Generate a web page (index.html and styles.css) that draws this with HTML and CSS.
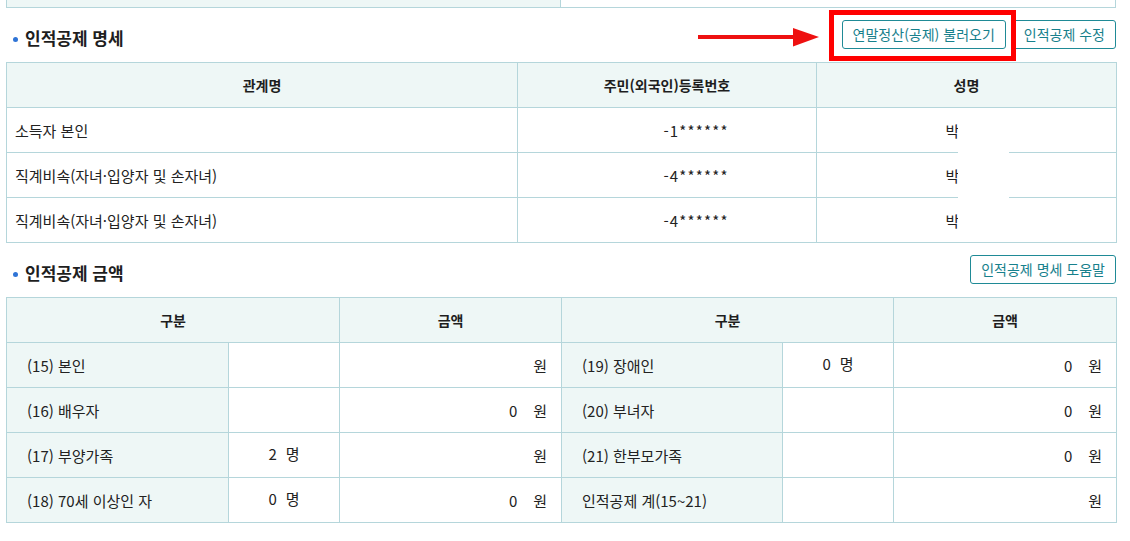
FILE: index.html
```html
<!DOCTYPE html>
<html lang="ko">
<head>
<meta charset="utf-8">
<title>인적공제</title>
<link rel="stylesheet" href="styles.css">
</head>
<body>
<div class="page">
  <div class="strip"><div class="strip-l"></div><div class="strip-r"></div></div>

  <div class="sec-head">
    <h3 class="sec-title"><span class="dot"></span>인적공제 명세</h3>
    <div class="actions">
      <svg class="arrow" width="121" height="20" viewBox="0 0 121 20" aria-hidden="true">
        <rect x="0" y="8" width="97" height="4" fill="#ee1111"/>
        <polygon points="95,1 121,10 95,19.5" fill="#ee1111"/>
      </svg>
      <div class="hl">
        <button class="btn">연말정산(공제) 불러오기</button>
        <span class="hl-box"></span>
      </div>
      <button class="btn">인적공제 수정</button>
    </div>
  </div>

  <div class="tbl-wrap">
    <table class="tbl">
      <colgroup><col class="c-rel"><col class="c-id"><col class="c-name"></colgroup>
      <thead>
        <tr><th>관계명</th><th>주민(외국인)등록번호</th><th>성명</th></tr>
      </thead>
      <tbody>
        <tr><td class="left">소득자 본인</td><td class="rrn">-1******</td><td class="name">박</td></tr>
        <tr><td class="left">직계비속(자녀·입양자 및 손자녀)</td><td class="rrn">-4******</td><td class="name">박</td></tr>
        <tr><td class="left">직계비속(자녀·입양자 및 손자녀)</td><td class="rrn">-4******</td><td class="name">박</td></tr>
      </tbody>
    </table>
    <span class="mask"></span>
  </div>

  <div class="sec-head">
    <h3 class="sec-title"><span class="dot"></span>인적공제 금액</h3>
    <div class="actions">
      <button class="btn">인적공제 명세 도움말</button>
    </div>
  </div>

  <table class="tbl">
    <colgroup>
      <col class="c-lab"><col class="c-cnt"><col class="c-amt">
      <col class="c-lab2"><col class="c-cnt"><col class="c-amt2">
    </colgroup>
    <thead>
      <tr><th colspan="2">구분</th><th>금액</th><th colspan="2">구분</th><th>금액</th></tr>
    </thead>
    <tbody>
      <tr>
        <td class="lab">(15) 본인</td><td class="cnt"></td><td class="amt"><span class="unit">원</span></td>
        <td class="lab">(19) 장애인</td><td class="cnt">0<span class="cu">명</span></td><td class="amt">0<span class="unit">원</span></td>
      </tr>
      <tr>
        <td class="lab">(16) 배우자</td><td class="cnt"></td><td class="amt">0<span class="unit">원</span></td>
        <td class="lab">(20) 부녀자</td><td class="cnt"></td><td class="amt">0<span class="unit">원</span></td>
      </tr>
      <tr>
        <td class="lab">(17) 부양가족</td><td class="cnt">2<span class="cu">명</span></td><td class="amt"><span class="unit">원</span></td>
        <td class="lab">(21) 한부모가족</td><td class="cnt"></td><td class="amt">0<span class="unit">원</span></td>
      </tr>
      <tr>
        <td class="lab">(18) 70세 이상인 자</td><td class="cnt">0<span class="cu">명</span></td><td class="amt">0<span class="unit">원</span></td>
        <td class="lab">인적공제 계(15~21)</td><td class="cnt"></td><td class="amt"><span class="unit">원</span></td>
      </tr>
    </tbody>
  </table>
</div>
</body>
</html>
```

FILE: styles.css
```css
* { box-sizing: border-box; }

html, body {
  margin: 0;
  padding: 0;
  background: #fff;
}

body {
  font-family: "Noto Sans CJK KR", "Noto Sans", sans-serif;
  font-size: 15px;
  color: #222;
}

.page {
  width: 1110px;
  margin-left: 6px;
}

/* cut-off table strip at the very top */
.strip {
  display: flex;
  height: 8px;
  border: 1px solid #b5d6db;
  border-top: 0;
}
.strip-l {
  width: 554px;
  background: #eef7f6;
  border-right: 1px solid #b5d6db;
}
.strip-r {
  flex: 1;
  background: #fff;
}

/* section header */
.sec-head {
  display: flex;
  justify-content: space-between;
  align-items: stretch;
  margin: 12px 0 13px;
}
.sec-title {
  margin: 0;
  display: flex;
  align-items: center;
  padding-top: 7px;
  font-size: 17px;
  font-weight: 700;
  color: #1e1e1e;
  line-height: 22px;
}
.dot {
  width: 5px;
  height: 5px;
  border-radius: 50%;
  background: #2f74d6;
  margin: 2px 7px 0 7px;
}

.actions {
  display: flex;
  align-items: center;
}
.arrow {
  display: block;
  margin: 5px 23px 0 0;
}

.btn {
  height: 29px;
  padding: 0 10px;
  font-family: inherit;
  font-size: 14px;
  line-height: 27px;
  color: #17808c;
  background: #fff;
  border: 1px solid #1f8a96;
  border-radius: 3px;
  white-space: nowrap;
}

.hl {
  position: relative;
  display: flex;
  margin-right: 7px;
}
.hl-box {
  position: absolute;
  left: -13px;
  right: -10px;
  top: -10px;
  bottom: -12px;
  border: 5px solid #ff0000;
  z-index: 2;
}

/* tables */
.tbl-wrap {
  position: relative;
}
.tbl {
  width: 1110px;
  table-layout: fixed;
  border-collapse: collapse;
  border: 1px solid #b5d6db;
}
.tbl th,
.tbl td {
  height: 45px;
  padding: 0;
  border: 1px solid #b5d6db;
  white-space: nowrap;
}
.tbl th {
  background: #eef7f6;
  font-size: 14px;
  font-weight: 700;
  color: #1e1e1e;
  text-align: center;
}
.tbl td {
  background: #fff;
  font-size: 15px;
  color: #222;
}

.c-rel { width: 511px; }
.c-id { width: 299px; }
.c-name { width: 300px; }

.c-lab { width: 222px; }
.c-cnt { width: 111px; }
.c-amt { width: 222px; }
.c-lab2 { width: 221px; }
.c-amt2 { width: 223px; }

td.left {
  padding-left: 8px;
}
td.rrn {
  text-align: center;
  padding-left: 58px;
  letter-spacing: 1.2px;
}
td.name {
  text-align: center;
  padding-right: 28px;
}

td.lab {
  background: #eef7f6;
  padding-left: 20px;
}
td.cnt {
  text-align: center;
  padding-bottom: 4px;
}
td.amt {
  text-align: right;
  padding-right: 14px;
}
.unit {
  margin-left: 16px;
}
.cu {
  margin-left: 9px;
}

/* white redaction patch over the name column */
.mask {
  position: absolute;
  left: 952px;
  top: 60px;
  width: 51px;
  height: 100px;
  background: #fff;
}
```
